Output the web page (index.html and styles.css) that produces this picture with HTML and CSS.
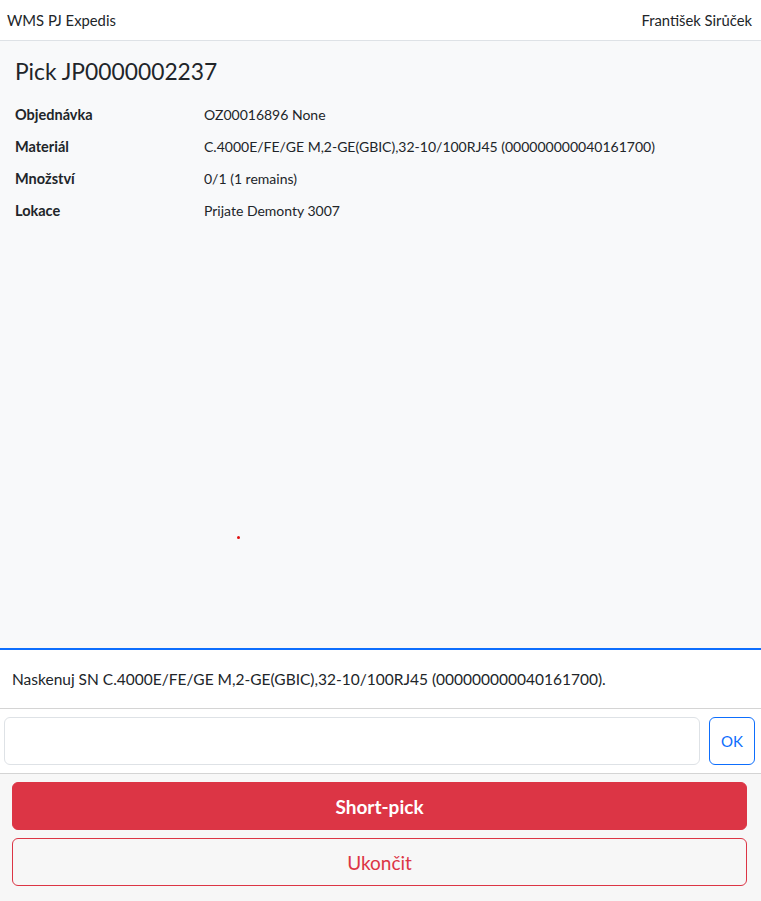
FILE: index.html
```html
<!DOCTYPE html>
<html lang="cs">
<head>
<meta charset="utf-8">
<title>WMS PJ Expedis</title>
<link rel="stylesheet" href="styles.css">
</head>
<body>
<div class="app">
  <header class="navbar">
    <span class="brand">WMS PJ Expedis</span>
    <span class="user">František Sirůček</span>
  </header>
  <main class="content">
    <h1 class="title">Pick JP0000002237</h1>
    <div class="details">
      <div class="label">Objednávka</div><div class="value">OZ00016896 None</div>
      <div class="label">Materiál</div><div class="value">C.4000E/FE/GE M,2-GE(GBIC),32-10/100RJ45 (000000000040161700)</div>
      <div class="label">Množství</div><div class="value">0/1 (1 remains)</div>
      <div class="label">Lokace</div><div class="value">Prijate Demonty 3007</div>
    </div>
    <span class="dot"></span>
  </main>
  <section class="message">Naskenuj SN C.4000E/FE/GE M,2-GE(GBIC),32-10/100RJ45 (000000000040161700).</section>
  <section class="scan">
    <input class="scan-input" type="text">
    <button class="btn-ok">OK</button>
  </section>
  <section class="actions">
    <button class="btn btn-danger">Short-pick</button>
    <button class="btn btn-outline">Ukončit</button>
  </section>
</div>
</body>
</html>
```
FILE: styles.css
```css
* { box-sizing: border-box; }
html, body { margin: 0; padding: 0; }
body {
  font-family: Lato, "Noto Sans", sans-serif;
  color: #212529;
  background: #f8f9fa;
}
.app {
  height: 100vh;
  display: flex;
  flex-direction: column;
}
.navbar {
  height: 41px;
  background: #fff;
  border-bottom: 1px solid #dee2e6;
  display: flex;
  justify-content: space-between;
  align-items: center;
  padding: 0 9px 0 7px;
  font-size: 14.8px;
}
.content {
  flex: 1;
  position: relative;
  padding: 14px 15px;
  background: #f8f9fa;
}
.title {
  margin: 0 0 11px;
  font-size: 22.8px;
  font-weight: 400;
  line-height: 32px;
}
.details {
  display: grid;
  grid-template-columns: 189px 1fr;
  grid-auto-rows: 32px;
  align-items: center;
  font-size: 14px;
}
.label { font-weight: 700; font-size: 14.5px; }
.dot {
  position: absolute;
  left: 237px;
  top: 495px;
  width: 3px;
  height: 3px;
  border-radius: 50%;
  background: #e01010;
}
.message {
  background: #fff;
  border-top: 2px solid #0d6efd;
  border-bottom: 1px solid #d4d4d4;
  padding: 17px 12px;
  font-size: 15.5px;
  line-height: 24px;
}
.scan {
  display: flex;
  gap: 9px;
  padding: 8px 6px 8px 4px;
  background: #fff;
  border-bottom: 1px solid #d4d4d4;
}
.scan-input {
  flex: 1;
  height: 48px;
  border: 1px solid #dee2e6;
  border-radius: 6px;
  background: #fff;
  font: inherit;
}
.btn-ok {
  width: 46px;
  height: 48px;
  border: 1px solid #0d6efd;
  border-radius: 6px;
  background: #fff;
  color: #0d6efd;
  font-family: inherit;
  font-size: 15px;
}
.actions {
  flex: none;
  display: flex;
  flex-direction: column;
  gap: 8px;
  padding: 8px 14px 15px 12px;
  background: #f7f7f7;
}
.btn {
  height: 48px;
  border-radius: 6px;
  font-family: inherit;
  font-size: 19px;
}
.btn-danger {
  background: #dc3545;
  border: 1px solid #dc3545;
  color: #fff;
  font-weight: 700;
}
.btn-outline {
  background: transparent;
  border: 1px solid #dc3545;
  color: #dc3545;
}
```
